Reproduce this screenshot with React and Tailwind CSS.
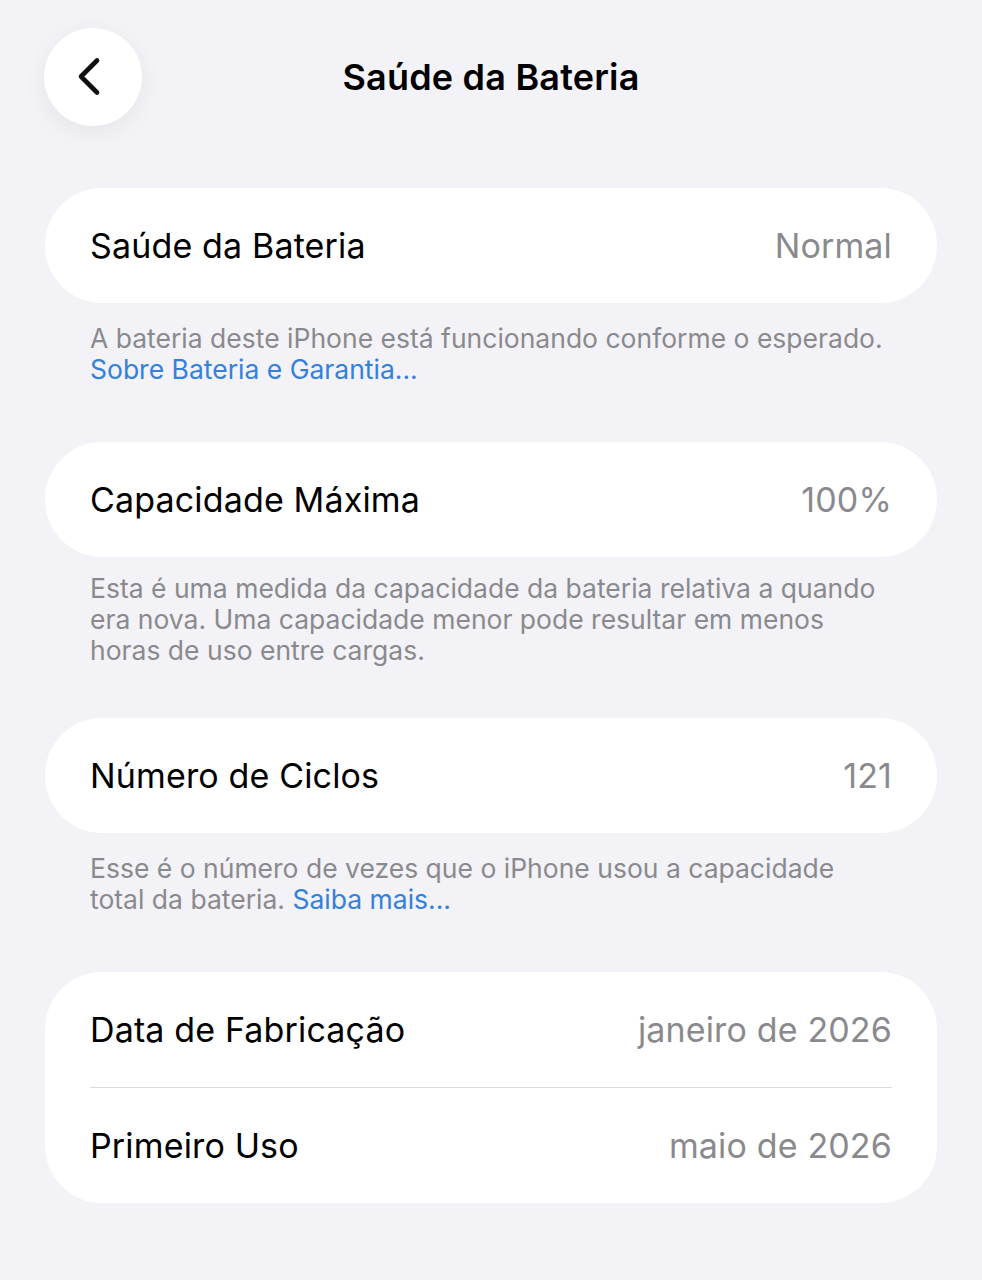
import React from "react";

const font = { fontFamily: "Inter, 'Noto Sans', sans-serif" };

function Row({ label, value }) {
  return (
    <div className="flex h-[115px] items-center justify-between px-[45px]">
      <span className="text-[34px] leading-none text-black tracking-[0.15px]">{label}</span>
      <span className="text-[34px] leading-none text-[#8a8a8e] tracking-[0.15px]">{value}</span>
    </div>
  );
}

function Card({ children }) {
  return <div className="overflow-hidden rounded-[57px] bg-white">{children}</div>;
}

function Footer({ lines, className = "" }) {
  return (
    <div className={"px-[45px] text-[26.5px] leading-[31px] text-[#8a8a8e] " + className}>
      {lines.map((l, i) => (
        <div key={i} className="whitespace-nowrap">{l}</div>
      ))}
    </div>
  );
}

export default function App() {
  return (
    <div className="min-h-[1280px] w-full bg-[#f2f2f7]" style={font}>
      <div className="flex items-center px-[44px] pt-[28px]">
        <button className="flex h-[98px] w-[98px] items-center justify-center rounded-full bg-white shadow-[0_6px_24px_rgba(0,0,0,0.06)]">
          <svg width="30" height="44" viewBox="0 0 30 44" fill="none" className="-ml-[4px]">
            <path d="M21 5.5 L5 21.5 L21 37.5" stroke="#111" strokeWidth="4.6" strokeLinecap="round" strokeLinejoin="round" />
          </svg>
        </button>
        <div className="flex-1 text-center text-[36px] font-semibold leading-none text-black tracking-[0.2px]">
          Saúde da Bateria
        </div>
        <div className="h-[98px] w-[98px]" />
      </div>

      <div className="px-[45px] pt-[62px]">
        <Card>
          <Row label="Saúde da Bateria" value="Normal" />
        </Card>
        <Footer
          className="mt-[20px]"
          lines={[
            "A bateria deste iPhone está funcionando conforme o esperado.",
            <span className="text-[#3480da]">Sobre Bateria e Garantia...</span>,
          ]}
        />

        <div className="mt-[57px]">
          <Card>
            <Row label="Capacidade Máxima" value="100%" />
          </Card>
        </div>
        <Footer
          className="mt-[16px]"
          lines={[
            "Esta é uma medida da capacidade da bateria relativa a quando",
            "era nova. Uma capacidade menor pode resultar em menos",
            "horas de uso entre cargas.",
          ]}
        />

        <div className="mt-[52px]">
          <Card>
            <Row label="Número de Ciclos" value="121" />
          </Card>
        </div>
        <Footer
          className="mt-[20px]"
          lines={[
            "Esse é o número de vezes que o iPhone usou a capacidade",
            <span>
              total da bateria. <span className="text-[#3480da]">Saiba mais...</span>
            </span>,
          ]}
        />

        <div className="mt-[57px]">
          <Card>
            <Row label="Data de Fabricação" value="janeiro de 2026" />
            <div className="mx-[45px] h-px bg-[#dcdce0]" />
            <Row label="Primeiro Uso" value="maio de 2026" />
          </Card>
        </div>
      </div>
    </div>
  );
}
